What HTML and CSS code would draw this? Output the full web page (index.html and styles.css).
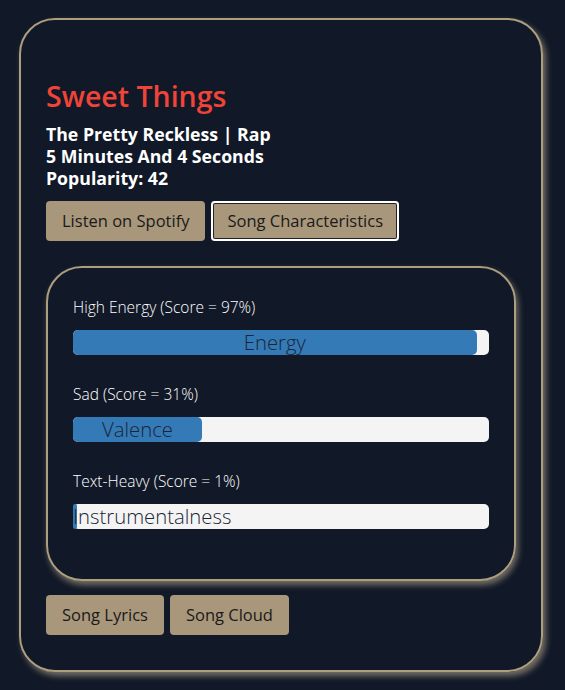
FILE: index.html
```html
<!DOCTYPE html>
<html>
<head>
<meta charset="utf-8">
<link rel="stylesheet" href="styles.css">
</head>
<body>
<div class="card">
  <h1 class="title">Sweet Things</h1>
  <div class="meta">
    <div>The Pretty Reckless | Rap</div>
    <div>5 Minutes And 4 Seconds</div>
    <div>Popularity: 42</div>
  </div>
  <div class="btns">
    <button class="btn">Listen on Spotify</button>
    <button class="btn focused">Song Characteristics</button>
  </div>
  <div class="inner">
    <div class="group">
      <div class="label">High Energy (Score = 97%)</div>
      <div class="bar"><div class="fill" style="width:97%">Energy</div></div>
    </div>
    <div class="group">
      <div class="label">Sad (Score = 31%)</div>
      <div class="bar"><div class="fill" style="width:31%">Valence</div></div>
    </div>
    <div class="group">
      <div class="label">Text-Heavy (Score = 1%)</div>
      <div class="bar"><div class="fill" style="width:1%">Instrumentalness</div></div>
    </div>
  </div>
  <div class="btns bottom">
    <button class="btn">Song Lyrics</button>
    <button class="btn">Song Cloud</button>
  </div>
</div>
</body>
</html>
```

FILE: styles.css
```css
html, body {
  margin: 0;
  padding: 0;
  background: #111827;
  font-family: "Open Sans", "Noto Sans", sans-serif;
}
body {
  padding: 18px 22px 0 19px;
  height: 690px;
  box-sizing: border-box;
}
.card {
  border: 2px solid #ae9e80;
  border-radius: 36px;
  height: 654px;
  box-sizing: border-box;
  padding: 59px 25px 35px 25px;
  box-shadow: 3px 4px 6px rgba(200, 185, 155, 0.55);
}
.title {
  margin: 0;
  font-size: 28.5px;
  line-height: 34px;
  font-weight: 600;
  color: #f04438;
}
.meta {
  margin-top: 10px;
  color: #fff;
  font-weight: 700;
  font-size: 17.7px;
  line-height: 22px;
}
.btns {
  display: flex;
  gap: 6px;
  margin-top: 12px;
}
.btn {
  font-family: inherit;
  font-size: 16.5px;
  line-height: 24px;
  height: 40px;
  padding: 0 16px;
  background: #a8977a;
  color: #1a1a1a;
  border: none;
  border-radius: 4px;
}
.btn.focused {
  box-shadow: inset 0 0 0 2px #fff, inset 0 0 0 3px #222;
}
.inner {
  margin-top: 25px;
  border: 2px solid #ae9e80;
  border-radius: 36px;
  height: 315px;
  box-sizing: border-box;
  padding: 27px 25px 0 25px;
  display: flex;
  flex-direction: column;
  gap: 27px;
  box-shadow: 2px 4px 6px rgba(200, 185, 155, 0.55);
}
.label {
  color: #fff;
  font-weight: 300;
  font-size: 15.5px;
  line-height: 24px;
}
.bar {
  margin-top: 11px;
  height: 25px;
  background: #f4f4f4;
  border-radius: 5px;
}
.fill {
  height: 100%;
  background: #337ab7;
  border-radius: 5px;
  color: #1c2535;
  font-weight: 300;
  font-size: 20.3px;
  line-height: 25px;
  text-align: center;
  white-space: nowrap;
}
.bottom {
  margin-top: 14px;
}
```
